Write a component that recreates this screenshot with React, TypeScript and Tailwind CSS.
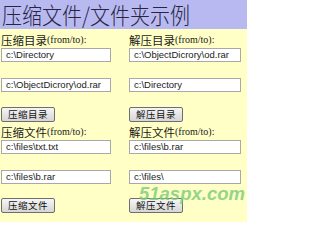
import React from "react";

const cjk = '"Noto Sans CJK SC", "Liberation Sans", sans-serif';

function Label({ cn }: { cn: string }) {
  return (
    <div className="h-[13px] flex items-end leading-none whitespace-nowrap text-[#1a1a1a]">
      <span className="text-[11.5px]" style={{ fontFamily: cjk }}>{cn}</span>
      <span className="text-[10px] font-['Liberation_Serif',serif] pb-[1px]">(from/to):</span>
    </div>
  );
}

function Field({ value, w }: { value: string; w: string }) {
  return (
    <div
      className={`${w} h-[14px] bg-white border border-[#a8a8a8] flex items-center pl-[4px] text-[9.5px] text-[#222] font-['Liberation_Sans',sans-serif] leading-none whitespace-nowrap overflow-hidden`}
    >
      {value}
    </div>
  );
}

function Btn({ text }: { text: string }) {
  return (
    <div
      className="w-[54px] h-[15px] border border-[#6e6e6e] rounded-[2px] bg-gradient-to-b from-[#f6f6f6] to-[#d6d6d6] flex items-center justify-center text-[9.5px] tracking-[0.5px] text-[#111] leading-none"
      style={{ fontFamily: cjk }}
    >
      {text}
    </div>
  );
}

function Column({
  l1, a, b, btn1, l2, c, d, btn2, w, cls,
}: {
  l1: string; a: string; b: string; btn1: string; l2: string; c: string; d: string; btn2: string; w: string; cls: string;
}) {
  return (
    <div className={`flex flex-col ${cls}`}>
      <div className="mt-[4px]"><Label cn={l1} /></div>
      <div className="mt-[2px]"><Field value={a} w={w} /></div>
      <div className="mt-[16px]"><Field value={b} w={w} /></div>
      <div className="mt-[15px]"><Btn text={btn1} /></div>
      <div className="mt-[3px]"><Label cn={l2} /></div>
      <div className="mt-[2px]"><Field value={c} w={w} /></div>
      <div className="mt-[16px]"><Field value={d} w={w} /></div>
      <div className="mt-[14px]"><Btn text={btn2} /></div>
    </div>
  );
}

export default function App() {
  return (
    <div className="relative w-[247px] h-[222px] bg-[#ffffc6] overflow-hidden">
      <div
        className="h-[29px] bg-[#b9b9f2] pl-[2px] flex items-center leading-none text-[#262640] whitespace-nowrap"
        style={{ fontFamily: cjk }}
      >
        <span className="inline-block text-[20px] font-light scale-y-[1.12] origin-center">压缩文件/文件夹示例</span>
      </div>
      <div className="flex">
        <Column
          cls="pl-[1px] w-[129px]"
          w="w-[110px]"
          l1="压缩目录"
          a={"c:\\Directory"}
          b={"c:\\ObjectDicrory\\od.rar"}
          btn1="压缩目录"
          l2="压缩文件"
          c={"c:\\files\\txt.txt"}
          d={"c:\\files\\b.rar"}
          btn2="压缩文件"
        />
        <Column
          cls=""
          w="w-[112px]"
          l1="解压目录"
          a={"c:\\ObjectDicrory\\od.rar"}
          b={"c:\\Directory"}
          btn1="解压目录"
          l2="解压文件"
          c={"c:\\files\\b.rar"}
          d={"c:\\files\\"}
          btn2="解压文件"
        />
      </div>
      <div className="absolute left-[139px] top-[185px] text-[18.5px] font-bold italic font-['Liberation_Sans',sans-serif] text-[#7acb7a] opacity-80 leading-none">
        51aspx.com
      </div>
    </div>
  );
}
